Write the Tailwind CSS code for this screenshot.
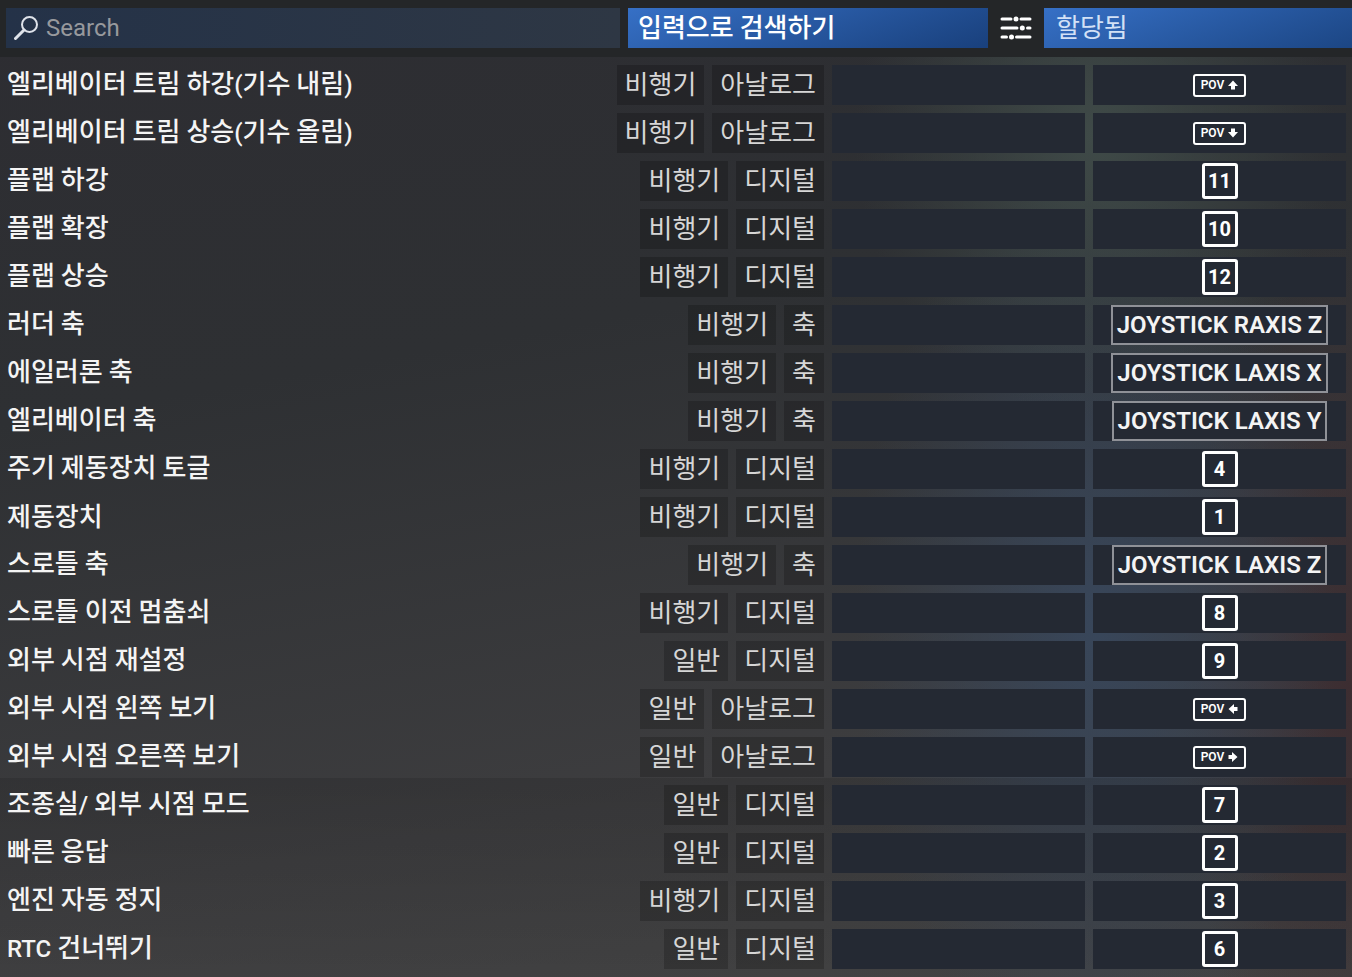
<!DOCTYPE html>
<html lang="ko">
<head>
	<meta charset="UTF-8" />
	<meta name="viewport" content="width=device-width, initial-scale=1.0" />
	<title>조작 설정</title>
	<script src="https://cdn.jsdelivr.net/npm/@tailwindcss/browser@4"></script>
</head>
<body class="min-h-screen overflow-x-hidden bg-[#303235] font-['Noto_Sans_CJK_KR',sans-serif] text-[26px] leading-10 text-[#f4f4f4]">
	<div id="app" class="min-h-screen bg-[linear-gradient(180deg,transparent_79.6%,rgb(0_0_0/0.12)_79.6%,transparent_100%),radial-gradient(ellipse_240px_280px_at_81%_14%,#3f4a48,transparent),radial-gradient(ellipse_240px_460px_at_81%_64%,#38465a,transparent),radial-gradient(ellipse_170px_460px_at_100%_70%,#3c2d31,transparent),linear-gradient(170deg,#2d2d32_0%,#2e3033_35%,#3d3d3f_75%,#434343_100%)]">

		<!-- Toolbar -->
		<header class="flex h-[57px] items-start bg-[#242628] pt-2 pl-[6px]">
			<div class="flex h-10 flex-1 items-center bg-linear-to-r from-[#243248] to-[#2e3744] pl-2">
				<svg class="h-6 w-6 shrink-0 text-[#dfe3ea]" viewBox="0 0 24 24" fill="none" stroke="currentColor">
					<circle cx="15.5" cy="8.5" r="7.5" stroke-width="2" />
					<path d="M10 14L1.5 22.5" stroke-width="3" stroke-linecap="round" />
				</svg>
				<input type="text" id="search" aria-label="Search" placeholder="Search" class="ml-2 h-10 min-w-0 flex-1 bg-transparent font-[Roboto,sans-serif] text-[24px] placeholder-[#97999d] outline-none">
			</div>
			<button type="button" class="ml-2 h-10 w-[360px] bg-linear-160 from-[#3670c6] to-[#19407c] px-2.5 pb-1 text-left leading-9 font-medium text-white">입력으로<span class="font-[Roboto,sans-serif] text-[24px]"> </span>검색하기</button>
			<button type="button" aria-label="필터" class="flex h-10 w-14 items-center justify-center">
				<svg class="h-6 w-8 text-white" viewBox="0 0 32 24" fill="currentColor">
					<rect x="0.5" y="1.5" width="12" height="3" rx="1.5" />
					<circle cx="16" cy="3" r="2.5" />
					<rect x="19.5" y="1.5" width="12" height="3" rx="1.5" />
					<rect x="0.5" y="10.5" width="18" height="3" rx="1.5" />
					<circle cx="22.3" cy="12" r="2.5" />
					<rect x="26" y="10.5" width="5.5" height="3" rx="1.5" />
					<rect x="0.5" y="19.5" width="7.5" height="3" rx="1.5" />
					<circle cx="11.5" cy="21" r="2.5" />
					<rect x="15" y="19.5" width="16.5" height="3" rx="1.5" />
				</svg>
			</button>
			<select id="filter" aria-label="필터 상태" class="h-10 w-[308px] appearance-none bg-linear-160 from-[#3670c6] to-[#1c4684] px-3 pb-1 leading-9 font-normal text-[#d3e1f6] outline-none">
				<option>할당됨</option>
			</select>
		</header>

		<!-- Bindings -->
		<main class="pt-1 pr-0.5">
			<table class="w-full table-fixed border-collapse">
				<colgroup>
					<col>
					<col class="w-[261px]">
					<col class="w-[261px]">
				</colgroup>
				<tbody id="bindings"></tbody>
			</table>
		</main>
	</div>

	<script>
		const rows = [
			['엘리베이터 트림 하강(기수 내림)', '비행기', '아날로그', 'pov', 'up'],
			['엘리베이터 트림 상승(기수 올림)', '비행기', '아날로그', 'pov', 'down'],
			['플랩 하강', '비행기', '디지털', 'button', '11'],
			['플랩 확장', '비행기', '디지털', 'button', '10'],
			['플랩 상승', '비행기', '디지털', 'button', '12'],
			['러더 축', '비행기', '축', 'axis', 'JOYSTICK RAXIS Z'],
			['에일러론 축', '비행기', '축', 'axis', 'JOYSTICK LAXIS X'],
			['엘리베이터 축', '비행기', '축', 'axis', 'JOYSTICK LAXIS Y'],
			['주기 제동장치 토글', '비행기', '디지털', 'button', '4'],
			['제동장치', '비행기', '디지털', 'button', '1'],
			['스로틀 축', '비행기', '축', 'axis', 'JOYSTICK LAXIS Z'],
			['스로틀 이전 멈춤쇠', '비행기', '디지털', 'button', '8'],
			['외부 시점 재설정', '일반', '디지털', 'button', '9'],
			['외부 시점 왼쪽 보기', '일반', '아날로그', 'pov', 'left'],
			['외부 시점 오른쪽 보기', '일반', '아날로그', 'pov', 'right'],
			['조종실/ 외부 시점 모드', '일반', '디지털', 'button', '7'],
			['빠른 응답', '일반', '디지털', 'button', '2'],
			['엔진 자동 정지', '비행기', '디지털', 'button', '3'],
			['RTC 건너뛰기', '일반', '디지털', 'button', '6'],
		];

		const rotation = { up: '', right: 'rotate-90', down: 'rotate-180', left: '-rotate-90' };

		// Latin letters, brackets and spaces are set in Roboto, a little smaller than the Hangul
		function label(name) {
			return name.replace(/[A-Z()\/ ]+/g, '<span class="font-[Roboto,sans-serif] text-[24px]">$&</span>');
		}

		function badge(type, value) {
			if (type === 'pov') {
				return `<span class="flex h-[23px] w-[53px] items-center justify-center gap-1 rounded-[3px] border-2 border-white font-[Roboto,sans-serif] text-[12px] leading-none font-semibold text-white">POV
					<svg class="h-[10px] w-[10px] ${rotation[value]}" viewBox="0 0 10 10" fill="currentColor" role="img" aria-label="${value}"><path d="M5 0.5L10 6H7V9.5H3V6H0Z" /></svg>
				</span>`;
			}
			if (type === 'axis') {
				return `<span class="flex h-10 items-center border-2 border-[#8f9197] px-1 font-[Roboto,sans-serif] text-[24px] leading-none font-semibold whitespace-nowrap text-[#f4f4f4]">${value}</span>`;
			}
			return `<span class="flex h-9 w-9 items-center justify-center rounded-[3px] border-3 border-white font-[Roboto,sans-serif] text-[20px] leading-none font-bold text-white">${value}</span>`;
		}

		document.getElementById('bindings').innerHTML = rows.map(([name, group, kind, type, value]) => `
			<tr class="h-12">
				<th scope="row" class="py-1 pr-1 pl-[7px] text-left font-medium">
					<div class="flex h-10 items-center gap-2">
						<span class="flex-1 truncate pb-1">${label(name)}</span>
						<span class="h-10 bg-black/20 px-2 leading-9 font-normal whitespace-nowrap text-[#d6d6d6]">${group}</span>
						<span class="h-10 bg-black/20 px-2 leading-9 font-normal whitespace-nowrap text-[#d6d6d6]">${kind}</span>
					</div>
				</th>
				<td class="px-1 py-1"><button type="button" aria-label="${name} 1" class="block h-10 w-full bg-[#242933]"></button></td>
				<td class="px-1 py-1"><button type="button" class="flex h-10 w-full items-center justify-center bg-[#242933]">${badge(type, value)}</button></td>
			</tr>`).join('');
	</script>
</body>
</html>
